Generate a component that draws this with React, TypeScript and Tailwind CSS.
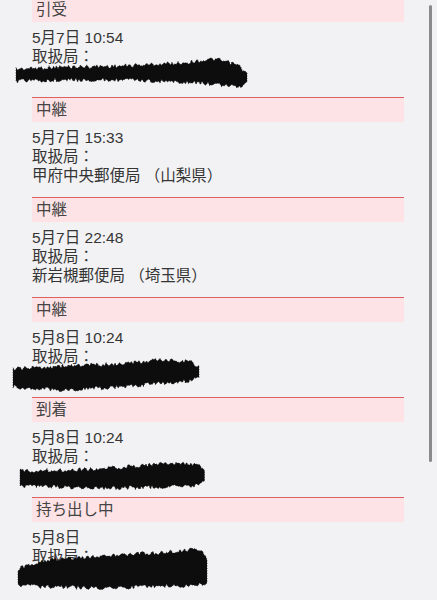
type Blob = [number, number, number][];

type Entry = {
  status: string;
  date: string;
  office?: string;
  blob?: Blob;
};

const entries: Entry[] = [
  {
    status: '引受',
    date: '5月7日 10:54',
    blob: [
      [16, 72, 84],
      [60, 70, 83],
      [120, 69, 83],
      [180, 66, 85],
      [215, 62, 87],
      [238, 68, 90],
      [248, 78, 86],
    ],
  },
  { status: '中継', date: '5月7日 15:33', office: '甲府中央郵便局 （山梨県）' },
  { status: '中継', date: '5月7日 22:48', office: '新岩槻郵便局 （埼玉県）' },
  {
    status: '中継',
    date: '5月8日 10:24',
    blob: [
      [13, 72, 90],
      [60, 69, 93],
      [120, 67, 90],
      [160, 63, 86],
      [190, 64, 84],
      [199, 70, 80],
    ],
  },
  {
    status: '到着',
    date: '5月8日 10:24',
    blob: [
      [20, 74, 89],
      [100, 72, 91],
      [170, 66, 90],
      [198, 68, 88],
      [205, 74, 84],
    ],
  },
  {
    status: '持ち出し中',
    date: '5月8日',
    blob: [
      [18, 72, 88],
      [45, 63, 90],
      [100, 59, 91],
      [170, 55, 89],
      [200, 52, 88],
      [207, 62, 86],
    ],
  },
];

function noise(i: number, seed: number) {
  const v = Math.sin(i * 12.9898 + seed * 78.233) * 43758.5453;
  return v - Math.floor(v);
}

function interp(pts: Blob, x: number, k: 1 | 2) {
  for (let i = 0; i < pts.length - 1; i++) {
    const a = pts[i];
    const b = pts[i + 1];
    if (x >= a[0] && x <= b[0]) {
      const t = (x - a[0]) / (b[0] - a[0]);
      return a[k] + (b[k] - a[k]) * t;
    }
  }
  return pts[pts.length - 1][k];
}

// marker scribble: jagged top and bottom edges
function blobPath(pts: Blob, seed: number) {
  const x0 = pts[0][0];
  const x1 = pts[pts.length - 1][0];
  const top: string[] = [];
  const bottom: string[] = [];
  for (let x = x0, i = 0; x <= x1; x += 1.5, i++) {
    top.push(`${x},${(interp(pts, x, 1) + (noise(i, seed) - 0.5) * 4).toFixed(1)}`);
    bottom.push(`${x},${(interp(pts, x, 2) + (noise(i, seed + 7) - 0.5) * 4).toFixed(1)}`);
  }
  return `M${top.join(' L')} L${bottom.reverse().join(' L')} Z`;
}

function Redaction({ blob, seed }: { blob: Blob; seed: number }) {
  return (
    <svg className="absolute left-0 top-0 w-full h-full overflow-visible pointer-events-none">
      <path d={blobPath(blob, seed)} fill="#0d0d0d" stroke="#1a1a1a" strokeWidth="0.8" strokeDasharray="1 1.5" />
    </svg>
  );
}

export default function App() {
  return (
    <div
      className="relative min-h-screen w-full overflow-hidden bg-[#f2f2f4] text-[#353535]"
      style={{ fontFamily: '"Liberation Sans", "Noto Sans CJK JP", sans-serif' }}
    >
      <div className="-mt-[3px]">
        {entries.map((e, i) => (
          <div key={i} className="relative">
            <div className="ml-[32px] mr-[33px]">
              <div className="h-px bg-[#dc6262]" />
              <div className="h-[24px] bg-[#fde3e5] pl-[4px] text-[15.5px] leading-[24px] text-[#444]">
                {e.status}
              </div>
            </div>
            <div className="pl-[32px] pt-[6px] pb-[12px] text-[15.5px] leading-[19px]">
              <div>{e.date}</div>
              <div>取扱局：</div>
              <div className="h-[19px]">{e.office}</div>
            </div>
            {e.blob && <Redaction blob={e.blob} seed={i + 1} />}
          </div>
        ))}
      </div>
      <div className="absolute left-[429px] top-[5px] h-[457px] w-[3px] rounded-full bg-[#8a8a8a]" />
    </div>
  );
}
